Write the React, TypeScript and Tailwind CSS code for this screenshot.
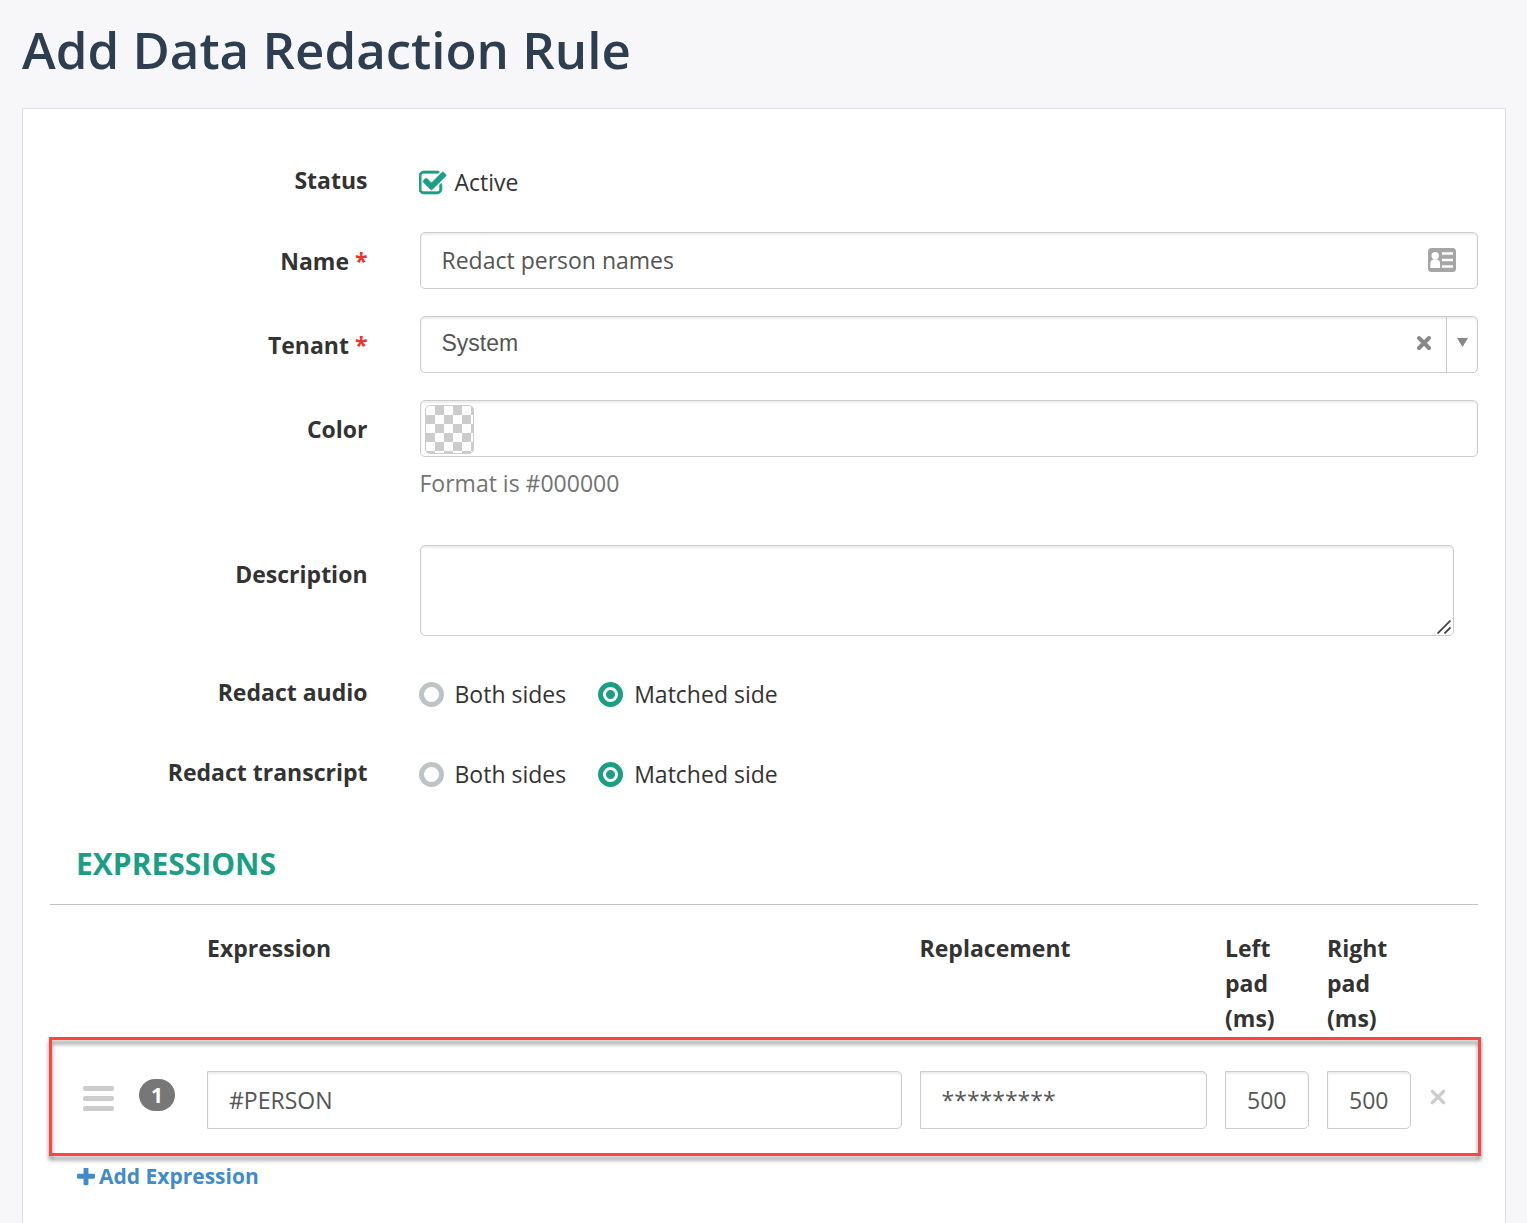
import React from "react";

const inputBox =
  "border border-[#ccc] bg-white text-[23px] text-[#555] shadow-[inset_0_2px_2px_rgba(0,0,0,0.075)] outline-none focus:border-[#1a9f85] ";

const expressionGrid =
  "grid grid-cols-[139px_minmax(0,29fr)_minmax(0,12fr)_84px_84px_49px] gap-x-[18px] ";

interface FieldProps {
  label: string;
  htmlFor?: string;
  id?: string;
  required?: boolean;
  children: React.ReactNode;
}

const Field = ({ label, htmlFor, id, required, children }: FieldProps) => {
  return (
    <div className="mb-[27px] flex">
      <div className="w-1/4 shrink-0 pt-3 pr-[26px] text-right">
        <label id={id} htmlFor={htmlFor} className="font-bold">
          {label}
          {required && <span className="text-[#f0302b]"> *</span>}
        </label>
      </div>
      <div className="min-w-0 flex-1 pr-[27px] pl-[26px]">{children}</div>
    </div>
  );
};

interface SidesProps {
  name: string;
  value: string;
  onChange: (value: string) => void;
}

const Sides = (props: SidesProps) => {
  const { name, value, onChange } = props;
  return (
    <div
      role="radiogroup"
      aria-labelledby={name + "-label"}
      className="-ml-px flex flex-wrap gap-x-8 pt-[14px] pb-1"
    >
      {["Both sides", "Matched side"].map((side) => (
        <label key={side} className="flex items-center gap-[11px]">
          <input
            type="radio"
            name={name}
            checked={value === side}
            onChange={() => onChange(side)}
            className="size-[25px] shrink-0 appearance-none rounded-full border-5 border-[#bdc3c7] bg-white checked:border-[#1a9f85] checked:bg-[radial-gradient(circle,#1a9f85_4px,#fff_5px)]"
          />
          {side}
        </label>
      ))}
    </div>
  );
};

const Cross = ({ className, width }: { className: string; width: number }) => (
  <svg
    viewBox="0 0 16 16"
    className={className}
    fill="none"
    stroke="currentColor"
    strokeWidth={width}
    strokeLinecap="round"
  >
    <path d="M3 3l10 10M13 3L3 13" />
  </svg>
);

export default function App() {
  const [active, setActive] = React.useState(true);
  const [name, setName] = React.useState("Redact person names");
  const [tenant, setTenant] = React.useState("System");
  const [audio, setAudio] = React.useState("Matched side");
  const [transcript, setTranscript] = React.useState("Matched side");

  return (
    <div className="flex min-h-screen flex-col bg-[#f7f7fa] pr-[21px] pl-[22px] font-['Open_Sans',sans-serif] text-[23px] leading-[35px] text-[#333]">
      <h1 className="pt-[13px] pb-[23px] text-[51px] leading-[72px] font-semibold text-[#2c3e50]">
        Add Data Redaction Rule
      </h1>
      <form
        className="flex-1 border border-b-0 border-[#ddd] bg-white pt-[42px] pb-7"
        onSubmit={(e) => e.preventDefault()}
      >
        <Field label="Status" htmlFor="active">
          <div className="-ml-px pt-[14px] pb-[5px]">
            <label className="flex items-center gap-2">
              <span className="relative flex size-7">
                <input
                  id="active"
                  type="checkbox"
                  checked={active}
                  onChange={(e) => setActive(e.target.checked)}
                  className="peer size-[23px] appearance-none rounded-md border-3 border-[#bdc3c7] checked:border-transparent"
                />
                <svg
                  viewBox="64 0 1728 1728"
                  className="pointer-events-none absolute inset-0 hidden size-7 text-[#1a9f85] peer-checked:block"
                  fill="currentColor"
                  stroke="currentColor"
                  strokeWidth="50"
                >
                  <path d="M1472 930v318q0 119-84.500 203.500t-203.500 84.500h-832q-119 0-203.500-84.500t-84.500-203.500v-832q0-119 84.500-203.500t203.500-84.500h832q63 0 117 25 15 7 18 23 3 17-9 29l-49 49q-10 10-23 10-3 0-9-2-23-6-45-6h-832q-66 0-113 47t-47 113v832q0 66 47 113t113 47h832q66 0 113-47t47-113v-254q0-13 9-22l64-64q10-10 23-10 6 0 12 3 20 8 20 29zm231-489l-814 814q-24 24-57 24t-57-24l-430-430q-24-24-24-57t24-57l110-110q24-24 57-24t57 24l263 263 647-647q24-24 57-24t57 24l110 110q24 24 24 57t-24 57z" />
                </svg>
              </span>
              Active
            </label>
          </div>
        </Field>

        <Field label="Name" htmlFor="name" required>
          <div className={inputBox + "flex h-[57px] items-center rounded-[5px] pr-[21px] pb-px"}>
            <input
              id="name"
              type="text"
              value={name}
              onChange={(e) => setName(e.target.value)}
              className="h-full min-w-0 flex-1 bg-transparent pl-[21px] outline-none"
            />
            <svg viewBox="0 0 28 24" className="h-6 w-7">
              <rect width="28" height="24" rx="3.500" fill="#a5a5a5" />
              <circle cx="7.200" cy="7.800" r="3.700" fill="#fff" />
              <path d="M2.300 20v-3.500q0-4.500 3-5h3.800q3 .5 3 5V20z" fill="#fff" />
              <path d="M14 5.500h11M14 12h11M14 18.500h11" stroke="#fff" strokeWidth="2.600" />
            </svg>
          </div>
        </Field>

        <Field label="Tenant" htmlFor="tenant" required>
          <div className={inputBox + "flex h-[57px] rounded-[5px]"}>
            <select
              id="tenant"
              value={tenant}
              onChange={(e) => setTenant(e.target.value)}
              className="min-w-0 flex-1 appearance-none bg-transparent pb-0.5 pl-[21px] font-['Liberation_Sans',sans-serif] outline-none"
            >
              <option value=""></option>
              <option>System</option>
            </select>
            <button
              type="button"
              aria-label="Clear tenant"
              className="px-[14px] pb-1 text-[#888]"
              onClick={() => setTenant("")}
            >
              <Cross className="size-4" width={4} />
            </button>
            <span className="flex w-[31px] items-center justify-center border-l border-[#ccc] pb-1 text-[#888]">
              <svg viewBox="0 0 11 9" className="h-[9px] w-[11px]" fill="currentColor">
                <path d="M0 0h11L5.500 9z" />
              </svg>
            </span>
          </div>
        </Field>

        <Field label="Color" htmlFor="color">
          <div className={inputBox + "flex h-[57px] items-end rounded-[5px] pb-0.5 pl-1"}>
            <span className="size-[49px] rounded-[5px] border border-[#ccc] bg-[conic-gradient(#ccc_25%,#fff_0_50%,#ccc_0_75%,#fff_0)] bg-size-[18px_18px]" />
            <input
              id="color"
              type="text"
              className="h-full min-w-0 flex-1 bg-transparent px-[21px] outline-none"
            />
          </div>
          <p className="mt-[9px] mb-[17px] text-[#737373]">Format is #000000</p>
        </Field>

        <Field label="Description" htmlFor="description">
          <div className="relative mr-6">
            <textarea
              id="description"
              className={inputBox + "block h-[91px] w-full resize-none rounded-[5px] px-[21px] py-2"}
            />
            <svg
              viewBox="0 0 14 14"
              className="pointer-events-none absolute right-[3px] bottom-[2px] size-[14px]"
              stroke="#444"
              strokeWidth="1.800"
            >
              <path d="M0.500 13.500l13-13M7.500 13.500l6-6" />
            </svg>
          </div>
        </Field>

        <Field label="Redact audio" id="audio-label">
          <Sides name="audio" value={audio} onChange={setAudio} />
        </Field>
        <Field label="Redact transcript" id="transcript-label">
          <Sides name="transcript" value={transcript} onChange={setTranscript} />
        </Field>

        <section className="mx-[27px]">
          <h2 className="border-b border-[#bdc3c7] px-[26px] pt-[23px] pb-[23px] text-[30px] font-bold text-[#1a9f85]">
            EXPRESSIONS
          </h2>
          <div className={expressionGrid + "pt-[26px] pb-px font-bold"}>
            <span />
            <span id="expression-head">Expression</span>
            <span id="replacement-head">Replacement</span>
            <span id="left-head">Left pad (ms)</span>
            <span id="right-head">Right pad (ms)</span>
          </div>
          <div className={expressionGrid + "relative pt-[34px] pb-[27px]"}>
            <div className="pointer-events-none absolute inset-y-0 -right-[3px] -left-px border-3 border-[#ff4343] drop-shadow-[0_4px_2px_rgba(0,0,0,0.45)]" />
            <div className="flex items-start gap-[25px] pt-2 pl-[33px]">
              <button
                type="button"
                aria-label="Reorder expression"
                className="flex flex-col gap-[5px] pt-[7px]"
              >
                <span className="h-[5px] w-[31px] rounded-xs bg-[#ccc]" />
                <span className="h-[5px] w-[31px] rounded-xs bg-[#ccc]" />
                <span className="h-[5px] w-[31px] rounded-xs bg-[#ccc]" />
              </button>
              <span className="flex h-8 w-9 items-center justify-center rounded-2xl bg-[#777] text-[21px] font-bold text-white">
                1
              </span>
            </div>
            <input
              type="text"
              aria-labelledby="expression-head"
              defaultValue="#PERSON"
              className={inputBox + "h-[58px] w-full rounded-r-[5px] px-[21px]"}
            />
            <input
              type="text"
              aria-labelledby="replacement-head"
              defaultValue="*********"
              className={inputBox + "h-[58px] w-full rounded-r-[5px] px-[21px]"}
            />
            <input
              type="text"
              aria-labelledby="left-head"
              defaultValue="500"
              className={inputBox + "h-[58px] w-full rounded-r-[5px] pl-[21px]"}
            />
            <input
              type="text"
              aria-labelledby="right-head"
              defaultValue="500"
              className={inputBox + "h-[58px] w-full rounded-r-[5px] pl-[21px]"}
            />
            <button
              type="button"
              aria-label="Remove expression"
              className="self-start pt-[17px] text-[#ccc]"
            >
              <Cross className="size-[18px]" width={3} />
            </button>
          </div>
          <a
            href="#add"
            className="mt-[3px] ml-[27px] inline-flex items-center gap-1 text-[21px] font-bold text-[#428bca]"
            onClick={(e) => e.preventDefault()}
          >
            <svg viewBox="192 192 1408 1408" className="size-[18px]" fill="currentColor">
              <path d="M1600 736v192q0 40-28 68t-68 28h-416v416q0 40-28 68t-68 28h-192q-40 0-68-28t-28-68v-416h-416q-40 0-68-28t-28-68v-192q0-40 28-68t68-28h416v-416q0-40 28-68t68-28h192q40 0 68 28t28 68v416h416q40 0 68 28t28 68z" />
            </svg>
            Add Expression
          </a>
        </section>
      </form>
    </div>
  );
}
